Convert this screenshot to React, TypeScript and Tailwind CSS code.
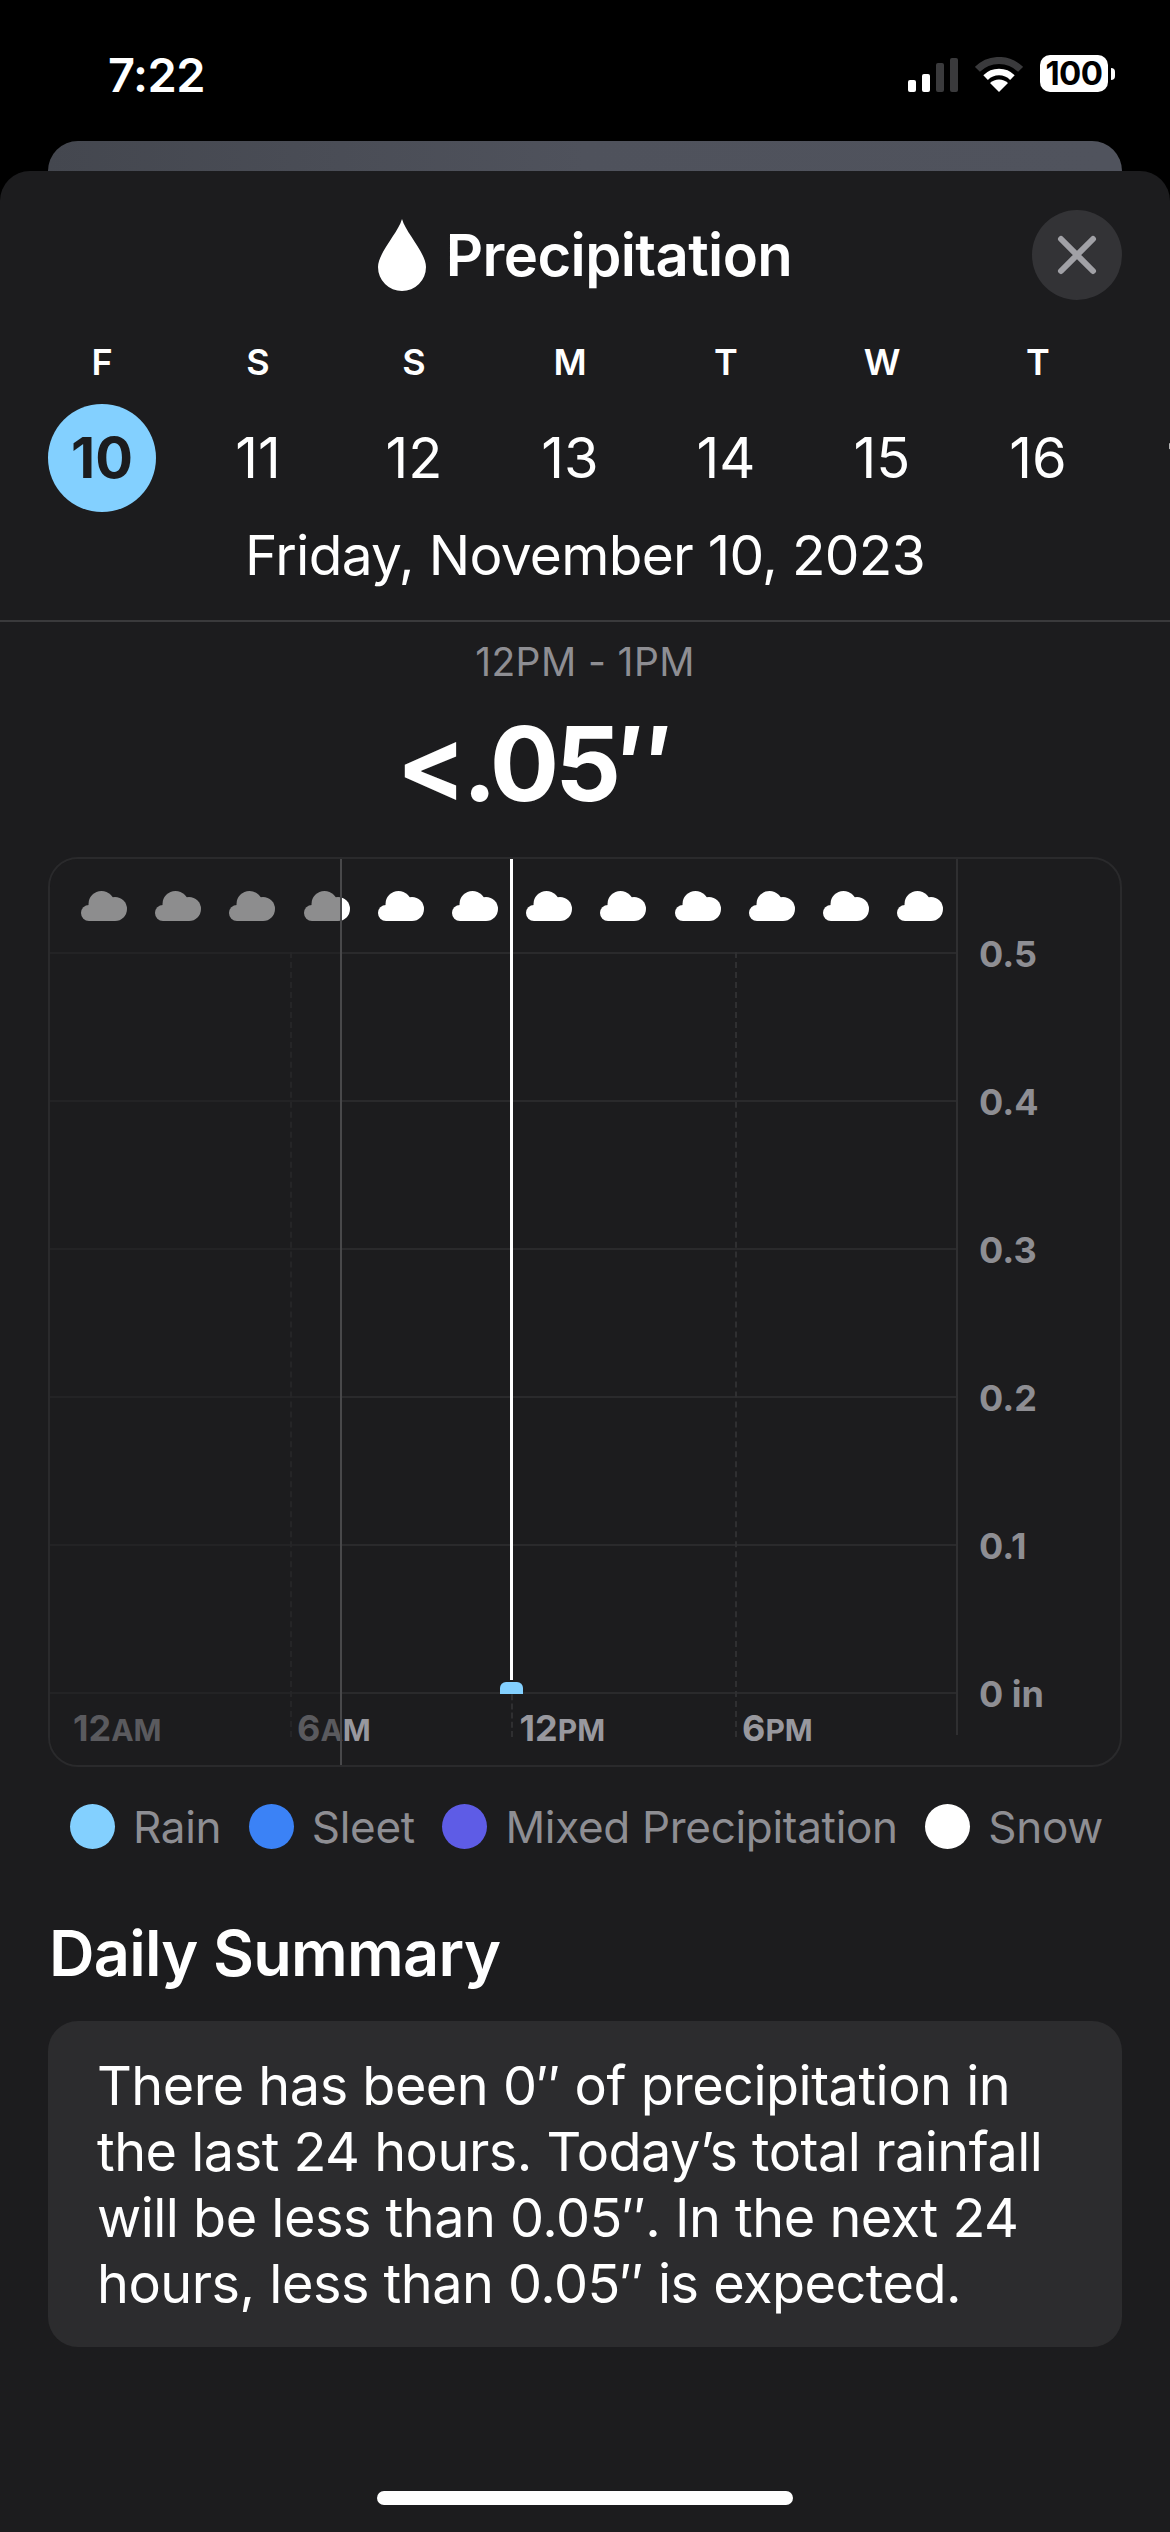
import React from "react";

const days = [
  ["F", "10"], ["S", "11"], ["S", "12"], ["M", "13"], ["T", "14"], ["W", "15"], ["T", "16"], ["", "17"],
];
const yLabels = ["0.5", "0.4", "0.3", "0.2", "0.1", "0 in"];
const times: [string, string][] = [["12", "AM"], ["6", "AM"], ["12", "PM"], ["6", "PM"]];
const legend: [string, string][] = [
  ["bg-[#83d0ff]", "Rain"],
  ["bg-[#3b82f6]", "Sleet"],
  ["bg-[#5e5ce6]", "Mixed Precipitation"],
  ["bg-white", "Snow"],
];

function Cloud() {
  return (
    <svg width="46" height="30" viewBox="0 0 46 30" fill="#fff">
      <circle cx="20.5" cy="13" r="13" />
      <circle cx="34" cy="18" r="12" />
      <circle cx="8" cy="22" r="8" />
      <rect x="8" y="14" width="26" height="16" />
    </svg>
  );
}

function StatusIcons() {
  return (
    <div className="flex items-end">
      <div className="flex items-end gap-[6px] mr-[17px]">
        <div className="w-[8px] h-[12px] rounded-[2px] bg-white" />
        <div className="w-[8px] h-[18px] rounded-[2px] bg-white" />
        <div className="w-[8px] h-[29px] rounded-[2px] bg-[#3a3a3c]" />
        <div className="w-[8px] h-[34px] rounded-[2px] bg-[#3a3a3c]" />
      </div>
      <svg width="48" height="35" viewBox="0 0 48 35" className="mr-[17px]" fill="none">
        <path d="M2.4 12.4 A30.5 30.5 0 0 1 45.6 12.4" stroke="#3a3a3c" strokeWidth="7" />
        <path d="M10.6 20.6 A19 19 0 0 1 37.4 20.6" stroke="#fff" strokeWidth="6.5" />
        <path d="M24 35 L15 26 A13 13 0 0 1 33 26 Z" fill="#fff" />
      </svg>
      <div className="w-[68px] h-[37px] rounded-[10px] bg-white flex items-center justify-center text-black text-[33px] font-bold leading-none tracking-[-0.5px]">
        100
      </div>
      <div className="w-[4px] h-[12px] rounded-r-[4px] bg-white ml-[3px] mb-[12px]" />
    </div>
  );
}

function Chart() {
  return (
    <div className="relative mx-[48px] h-[910px] rounded-[30px] border-2 border-[#2a2a2c] flex overflow-hidden">
      <div className="w-[908px] shrink-0 flex flex-col border-r-2 border-[#2f2f31] mb-[30px]">
        <div className="h-[93px] shrink-0 flex pl-[17px] pt-[32px]">
          {Array.from({ length: 12 }).map((_, i) => (
            <div key={i} className="w-[74.2px] shrink-0 flex justify-center">
              <Cloud />
            </div>
          ))}
        </div>
        {[0, 1, 2, 3, 4].map((i) => (
          <div key={i} className="h-[148px] shrink-0 border-t-2 border-[#2a2a2c]" />
        ))}
        <div className="border-t-2 border-[#2a2a2c] flex pt-[16px] text-[#98989e] font-bold leading-none">
          {times.map(([n, s], i) => (
            <div key={i} className={`shrink-0 ${i === 0 ? "w-[246px] pl-[23px]" : "w-[222.5px] pl-[1px]"}`}>
              <span className="text-[36px]">{n}</span>
              <span className="text-[30px]">{s}</span>
            </div>
          ))}
        </div>
      </div>
      <div className="pt-[21px] pl-[21px] text-[#8e8e93] text-[36px] font-bold">
        {yLabels.map((l) => (
          <div key={l} className="h-[148px] flex items-center whitespace-nowrap">{l}</div>
        ))}
      </div>

      {/* vertical guides over the plot */}
      {[240, 685].map((x) => (
        <div key={x} className="absolute top-[93px] h-[785px] border-l-2 border-dashed border-[#2f2f31]" style={{ left: x }} />
      ))}
      <div className="absolute left-[461px] top-[826px] h-[52px] border-l-2 border-dashed border-[#2f2f31]" />
      <div className="absolute left-0 top-0 bottom-0 w-[292px] bg-[#1c1c1e]/50 border-r-2 border-[#48484a]" />
      <div className="absolute left-[460px] top-0 w-[3px] h-[821px] bg-white" />
      <div className="absolute left-[450px] top-[823px] w-[23px] h-[12px] rounded-t-[6px] bg-[#83d0ff]" />
    </div>
  );
}

export default function App() {
  return (
    <div className="w-[1170px] h-[2532px] bg-black text-white flex flex-col overflow-hidden [font-family:Inter,sans-serif]">
      {/* status bar */}
      <div className="h-[141px] shrink-0 pl-[62px] pr-[55px] pt-[55px] flex justify-between items-start">
        <div className="pl-[46px] text-[47px] leading-[40px] font-semibold tracking-[-0.5px]">7:22</div>
        <StatusIcons />
      </div>
      <div className="h-[30px] shrink-0 mx-[48px] rounded-t-[30px] bg-gradient-to-r from-[#44474f] via-[#4f525c] to-[#50535d]" />

      {/* sheet */}
      <div className="flex-1 rounded-t-[30px] bg-[#1c1c1e] flex flex-col">
        <div className="relative h-[90px] mt-[39px] shrink-0 flex items-center justify-center">
          <div className="flex items-center">
            <svg width="48" height="72" viewBox="0 0 48 72" fill="#fff" className="mr-[20px]">
              <path d="M24 0 C20 14 0 34 0 48 A24 24 0 0 0 48 48 C48 34 28 14 24 0Z" />
            </svg>
            <span className="text-[58px] font-semibold tracking-[-0.6px] leading-none">Precipitation</span>
          </div>
          <div className="absolute right-[48px] top-0 w-[90px] h-[90px] rounded-full bg-[#333336] flex items-center justify-center">
            <svg width="40" height="40" viewBox="0 0 40 40" fill="none" stroke="#a1a1a6" strokeWidth="6" strokeLinecap="round">
              <path d="M4 4 L36 36 M36 4 L4 36" />
            </svg>
          </div>
        </div>

        {/* day strip */}
        <div className="flex pl-[24px] mt-[40px] overflow-hidden shrink-0">
          {days.map(([d, n], i) => (
            <div key={i} className="w-[156px] shrink-0 flex flex-col items-center">
              <div className="h-[44px] flex items-center text-[36px] font-semibold leading-none">{d}</div>
              <div
                className={`mt-[20px] w-[108px] h-[108px] rounded-full flex items-center justify-center text-[56px] leading-none ${
                  i === 0 ? "bg-[#83d0ff] text-[#1c1c1e] font-bold" : "font-normal"
                }`}
              >
                {n}
              </div>
            </div>
          ))}
        </div>
        <div className="h-[86px] shrink-0 flex items-center justify-center text-[55px] tracking-[-0.7px] leading-none">
          Friday, November 10, 2023
        </div>
        <div className="mt-[22px] h-[2px] shrink-0 bg-[#3a3a3c]" />
        <div className="h-[80px] pb-[2px] shrink-0 flex items-center justify-center text-[39px] tracking-[0.4px] text-[#8e8e93] leading-none">
          12PM - 1PM
        </div>
        <div className="h-[155px] shrink-0 flex justify-center pt-[7px] pr-[104px] text-[103px] font-bold leading-[110px] tracking-[-4px]">
          &lt;.05″
        </div>

        <Chart />

        {/* legend */}
        <div className="mt-[37px] ml-[70px] w-[1033px] h-[45px] shrink-0 flex justify-between items-center text-[#8e8e93] text-[44px] leading-none">
          {legend.map(([c, l]) => (
            <div key={l} className="flex items-center gap-[18px]">
              <div className={`w-[45px] h-[45px] rounded-full ${c}`} />
              <span className="tracking-[-0.3px] whitespace-nowrap">{l}</span>
            </div>
          ))}
        </div>

        <div className="mt-[69px] ml-[49px] text-[63px] font-semibold leading-[70px] tracking-[-0.7px]">Daily Summary</div>

        <div className="mt-[33px] mx-[48px] h-[326px] rounded-[30px] bg-[#2c2c2e] pl-[49px] pr-[40px] pt-[32px] text-[54px] leading-[66px] tracking-[-0.5px]">
          There has been 0″ of precipitation in the last 24 hours. Today’s total rainfall will be less than 0.05″. In the next 24 hours, less than 0.05″ is expected.
        </div>

        <div className="mt-auto mb-[27px] mx-auto w-[416px] h-[14px] rounded-full bg-white" />
      </div>
    </div>
  );
}
